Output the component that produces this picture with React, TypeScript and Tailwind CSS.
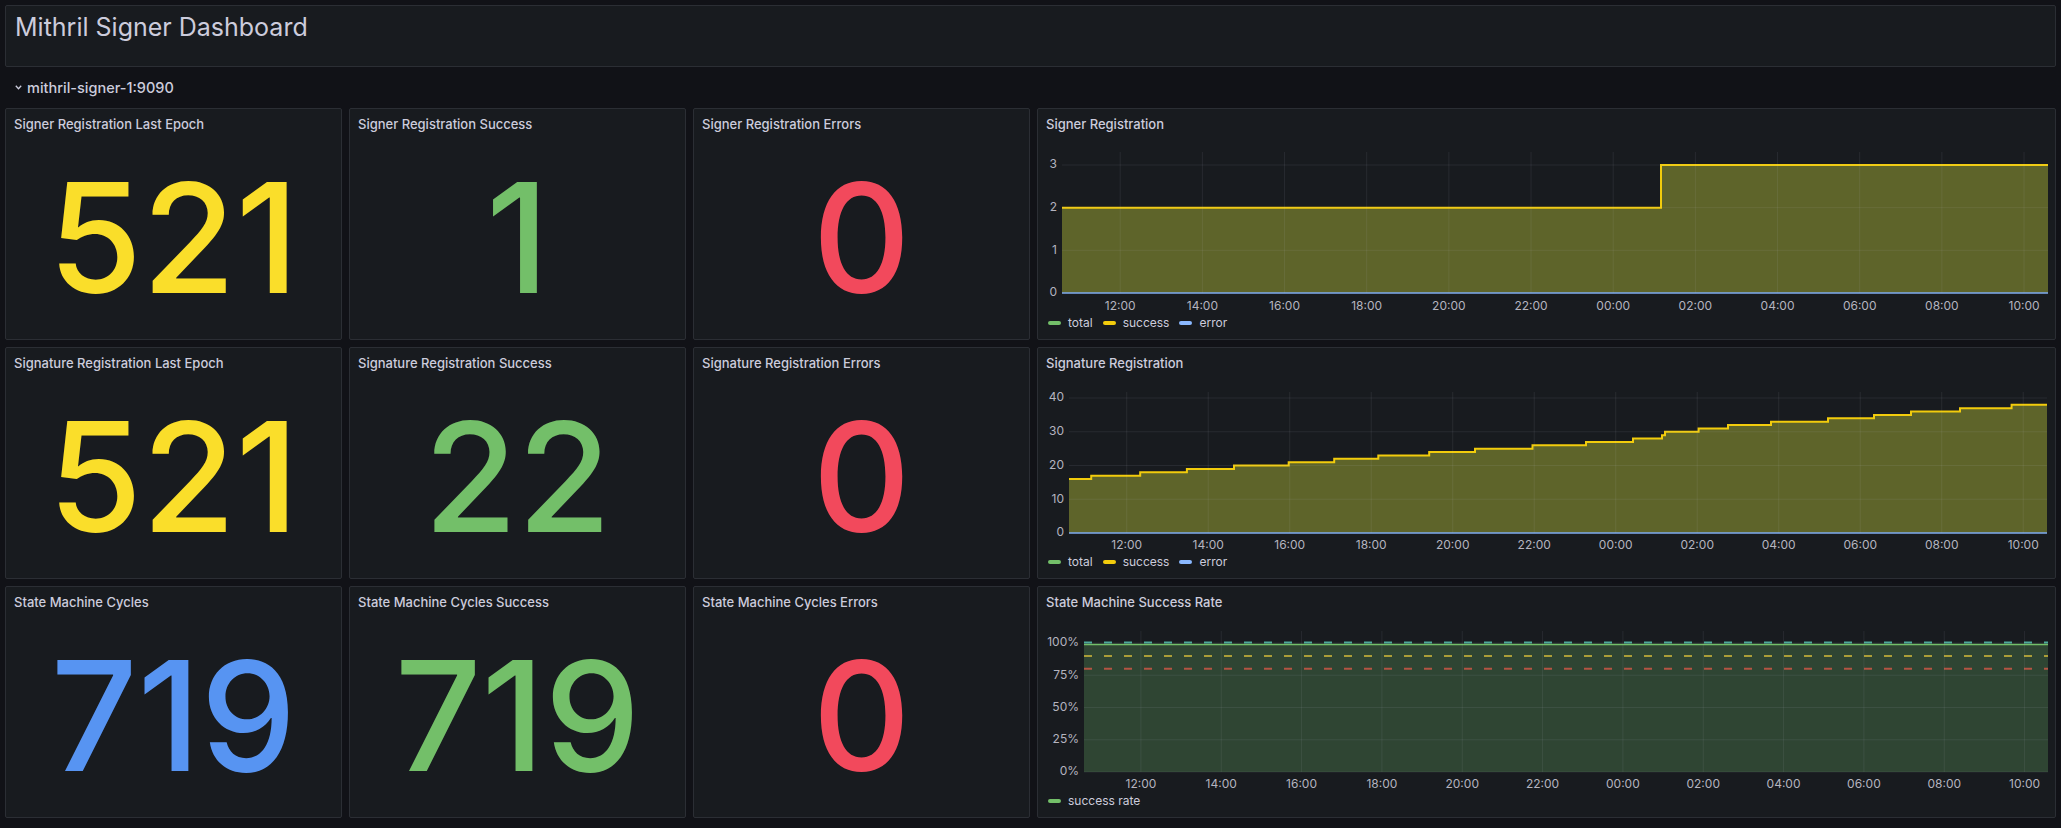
import type { ReactNode } from "react";

// Dashboard time range: ~10:35 -> 10:35 next day (24h)
const T0 = 10 + 35 / 60;
const TIME_LABELS = ["12:00", "14:00", "16:00", "18:00", "20:00", "22:00", "00:00", "02:00", "04:00", "06:00", "08:00", "10:00"];

const YELLOW = "#F2CC0C";
const GREEN = "#73BF69";
const BLUE = "#7aa8ee";

type Point = [number, number]; // [hours since range start, value]

// signature registrations, stepping up through the day
const SIGNATURE_STEPS: Point[] = [
  [0, 16], [0.545, 17], [1.747, 18], [2.893, 19], [4.049, 20], [5.391, 21],
  [6.508, 22], [7.59, 23], [8.839, 24], [9.963, 25], [11.374, 26], [12.687, 27],
  [13.84, 28], [14.552, 29], [14.626, 30], [15.45, 31], [16.172, 32], [17.227, 33],
  [18.626, 34], [19.755, 35], [20.663, 36], [21.865, 37], [23.131, 38],
];

const SIGNER_STEPS: Point[] = [
  [0, 2],
  [14.58, 3],
];

interface ChartProps {
  left: number;
  right: number;
  top: number;
  y0: number; // pixel of value 0
  yMaxPx: number; // pixel of the top tick
  vMax: number;
  ticks: number[];
  fmt?: (v: number) => string;
  children: (x: (h: number) => number, y: (v: number) => number) => ReactNode;
}

const VB_W = 1017;
const VB_H = 172;

function TimeChart({ left, right, top, y0, yMaxPx, vMax, ticks, fmt = (v) => String(v), children }: ChartProps) {
  const x = (h: number) => left + (h / 24) * (right - left);
  const y = (v: number) => y0 - (v / vMax) * (y0 - yMaxPx);
  const hourTicks = TIME_LABELS.map((_, i) => 12 - T0 + i * 2);

  return (
    <svg width={VB_W} height={VB_H} viewBox={`0 0 ${VB_W} ${VB_H}`} className="block">
      {children(x, y)}
      {/* grid */}
      {ticks.map((t) => (
        <line key={`h${t}`} x1={left} x2={right} y1={y(t)} y2={y(t)} stroke="rgba(204,204,220,0.09)" strokeWidth={1} />
      ))}
      {hourTicks.map((h) => (
        <line key={`v${h}`} x1={x(h)} x2={x(h)} y1={top} y2={y0} stroke="rgba(204,204,220,0.09)" strokeWidth={1} />
      ))}
      {/* axis labels */}
      {ticks.map((t) => (
        <text key={`yl${t}`} x={left - 5} y={y(t)} textAnchor="end" dominantBaseline="middle" fontSize={12} fill="#b4b4bf" fontFamily="Inter, sans-serif">
          {fmt(t)}
        </text>
      ))}
      {hourTicks.map((h, i) => (
        <text key={`xl${h}`} x={x(h)} y={166} textAnchor="middle" dominantBaseline="middle" fontSize={12} fill="#b4b4bf" fontFamily="Inter, sans-serif">
          {TIME_LABELS[i]}
        </text>
      ))}
    </svg>
  );
}

function stepPath(pts: Point[], x: (h: number) => number, y: (v: number) => number) {
  let d = `M${x(pts[0][0])},${y(pts[0][1])}`;
  for (let i = 1; i < pts.length; i++) d += ` H${x(pts[i][0])} V${y(pts[i][1])}`;
  return d + ` H${x(24)}`;
}

function RegistrationSeries({ pts, x, y }: { pts: Point[]; x: (h: number) => number; y: (v: number) => number }) {
  const line = stepPath(pts, x, y);
  return (
    <g>
      <path d={`${line} V${y(0)} H${x(0)} Z`} fill="#5e642a" />
      <path d={line} fill="none" stroke={YELLOW} strokeWidth={2} />
      <line x1={x(0)} x2={x(24)} y1={y(0)} y2={y(0)} stroke={BLUE} strokeWidth={1.5} />
    </g>
  );
}

function Legend({ items }: { items: { label: string; color: string }[] }) {
  return (
    <div className="flex h-5 items-center gap-[10px] pl-[10px] text-xs text-[#ccccdc]">
      {items.map((it) => (
        <div key={it.label} className="flex items-center gap-[7px]">
          <span className="h-[4px] w-[13px] rounded-full" style={{ background: it.color }} />
          <span>{it.label}</span>
        </div>
      ))}
    </div>
  );
}

const REG_LEGEND = [
  { label: "total", color: GREEN },
  { label: "success", color: YELLOW },
  { label: "error", color: "#8AB8FF" },
];

function Panel({ title, children }: { title: string; children: ReactNode }) {
  return (
    <div className="flex min-w-0 flex-col overflow-hidden rounded-[2px] border border-[#2b2e34] bg-[#181b1f]">
      <div className="flex h-8 shrink-0 items-center px-2 pb-[1px] text-[13px] font-medium text-[#ccccdc]">{title}</div>
      <div className="min-h-0 flex-1">{children}</div>
    </div>
  );
}

function Stat({ title, value, color }: { title: string; value: string; color: string }) {
  return (
    <Panel title={title}>
      <div className="flex h-full items-center justify-center pb-[4px]">
        <span className={`text-[152px] font-medium leading-none ${color}`}>{value}</span>
      </div>
    </Panel>
  );
}

export default function App() {
  return (
    <div className="min-h-screen bg-[#111217] px-[5px] pt-[5px] font-['Inter',sans-serif]">
      {/* Text panel */}
      <div className="h-[62px] rounded-[2px] border border-[#2b2e34] bg-[#181b1f] pl-[9px] pt-[6px]">
        <h1 className="text-[25px] font-normal leading-[1.2] text-[#ccccdc]">Mithril Signer Dashboard</h1>
      </div>

      {/* Row header */}
      <div className="flex h-[41px] items-center gap-[5px] pl-[10px] text-[14.5px] font-medium text-[#ccccdc]">
        <svg width="7" height="5" viewBox="0 0 7 5">
          <path d="M0.8 0.8 L3.5 3.8 L6.2 0.8" fill="none" stroke="#ccccdc" strokeWidth="1.3" />
        </svg>
        <span>mithril-signer-1:9090</span>
      </div>

      <div className="grid grid-cols-[337px_337px_337px_1fr] grid-rows-[232px_232px_232px] gap-[7px]">
        <Stat title="Signer Registration Last Epoch" value="521" color="text-[#FADE2A]" />
        <Stat title="Signer Registration Success" value="1" color="text-[#73BF69]" />
        <Stat title="Signer Registration Errors" value="0" color="text-[#F2495C]" />
        <Panel title="Signer Registration">
          <TimeChart left={24} right={1010} top={11} y0={152} yMaxPx={24} vMax={3} ticks={[0, 1, 2, 3]}>
            {(x, y) => <RegistrationSeries pts={SIGNER_STEPS} x={x} y={y} />}
          </TimeChart>
          <Legend items={REG_LEGEND} />
        </Panel>

        <Stat title="Signature Registration Last Epoch" value="521" color="text-[#FADE2A]" />
        <Stat title="Signature Registration Success" value="22" color="text-[#73BF69]" />
        <Stat title="Signature Registration Errors" value="0" color="text-[#F2495C]" />
        <Panel title="Signature Registration">
          <TimeChart left={31} right={1009} top={12} y0={153} yMaxPx={18} vMax={40} ticks={[0, 10, 20, 30, 40]}>
            {(x, y) => <RegistrationSeries pts={SIGNATURE_STEPS} x={x} y={y} />}
          </TimeChart>
          <Legend items={REG_LEGEND} />
        </Panel>

        <Stat title="State Machine Cycles" value="719" color="text-[#5794F2]" />
        <Stat title="State Machine Cycles Success" value="719" color="text-[#73BF69]" />
        <Stat title="State Machine Cycles Errors" value="0" color="text-[#F2495C]" />
        <Panel title="State Machine Success Rate">
          <TimeChart
            left={46}
            right={1010}
            top={12}
            y0={153}
            yMaxPx={24}
            vMax={100}
            ticks={[0, 25, 50, 75, 100]}
            fmt={(v) => `${v}%`}
          >
            {(x, y) => (
              <g>
                <rect x={x(0)} y={y(100) + 1} width={x(24) - x(0)} height={y(0) - y(100) - 1} fill="#2f4533" />
                <line x1={x(0)} x2={x(24)} y1={y(100) + 1.5} y2={y(100) + 1.5} stroke={GREEN} strokeWidth={1.5} />
                <line x1={x(0)} x2={x(24)} y1={y(100) - 0.5} y2={y(100) - 0.5} stroke="#4aa898" strokeWidth={2} strokeDasharray="8 12" />
                <line x1={x(0)} x2={x(24)} y1={y(90)} y2={y(90)} stroke="#ab9d38" strokeWidth={2} strokeDasharray="8 12" />
                <line x1={x(0)} x2={x(24)} y1={y(80)} y2={y(80)} stroke="#b35443" strokeWidth={2} strokeDasharray="8 12" />
              </g>
            )}
          </TimeChart>
          <Legend items={[{ label: "success rate", color: GREEN }]} />
        </Panel>
      </div>
    </div>
  );
}
